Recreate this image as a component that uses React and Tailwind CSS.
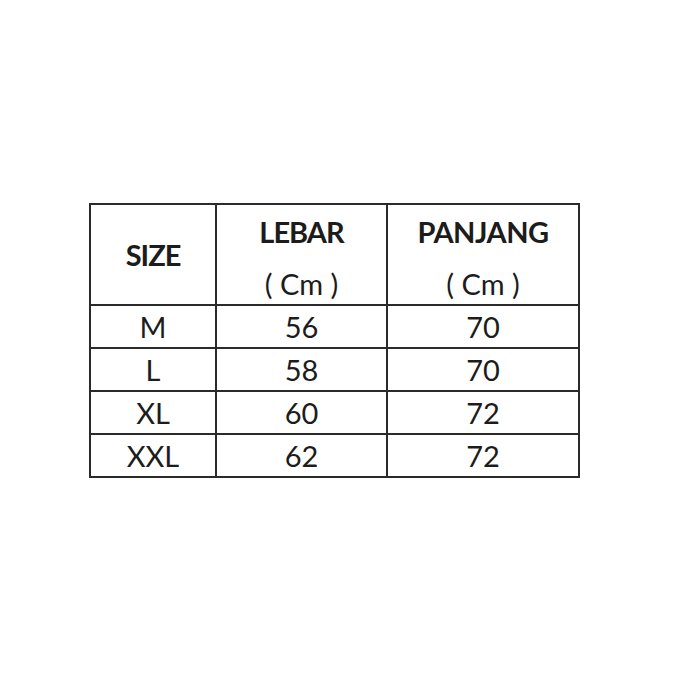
import React from 'react';

const rows = [
  ['M', '56', '70'],
  ['L', '58', '70'],
  ['XL', '60', '72'],
  ['XXL', '62', '72'],
];

const App = () => {
  return (
    <div className="w-[680px] h-[680px] bg-white font-['Lato','Liberation_Sans',sans-serif] text-[#1c1c1c]">
      <div className="pt-[203px] pl-[89px]">
        <table className="border-collapse border-2 border-[#2a2a2a] text-[29px] leading-none">
          <thead>
            <tr className="h-[101px]">
              <th className="w-[126px] border-2 border-[#2a2a2a] font-bold tracking-[-1px] text-center align-middle">SIZE</th>
              <th className="w-[171px] border-2 border-[#2a2a2a] font-bold text-center align-top">
                <div className="pt-[12px] tracking-[-1px]">LEBAR</div>
                <div className="pt-[23px] font-normal">( Cm )</div>
              </th>
              <th className="w-[192px] border-2 border-[#2a2a2a] font-bold text-center align-top">
                <div className="pt-[12px] tracking-[-0.5px]">PANJANG</div>
                <div className="pt-[23px] font-normal">( Cm )</div>
              </th>
            </tr>
          </thead>
          <tbody>
            {rows.map((r) => (
              <tr key={r[0]} className="h-[43px]">
                {r.map((c, i) => (
                  <td key={i} className="border-2 border-[#2a2a2a] text-center align-middle">
                    {c}
                  </td>
                ))}
              </tr>
            ))}
          </tbody>
        </table>
      </div>
    </div>
  );
};

export default App;
